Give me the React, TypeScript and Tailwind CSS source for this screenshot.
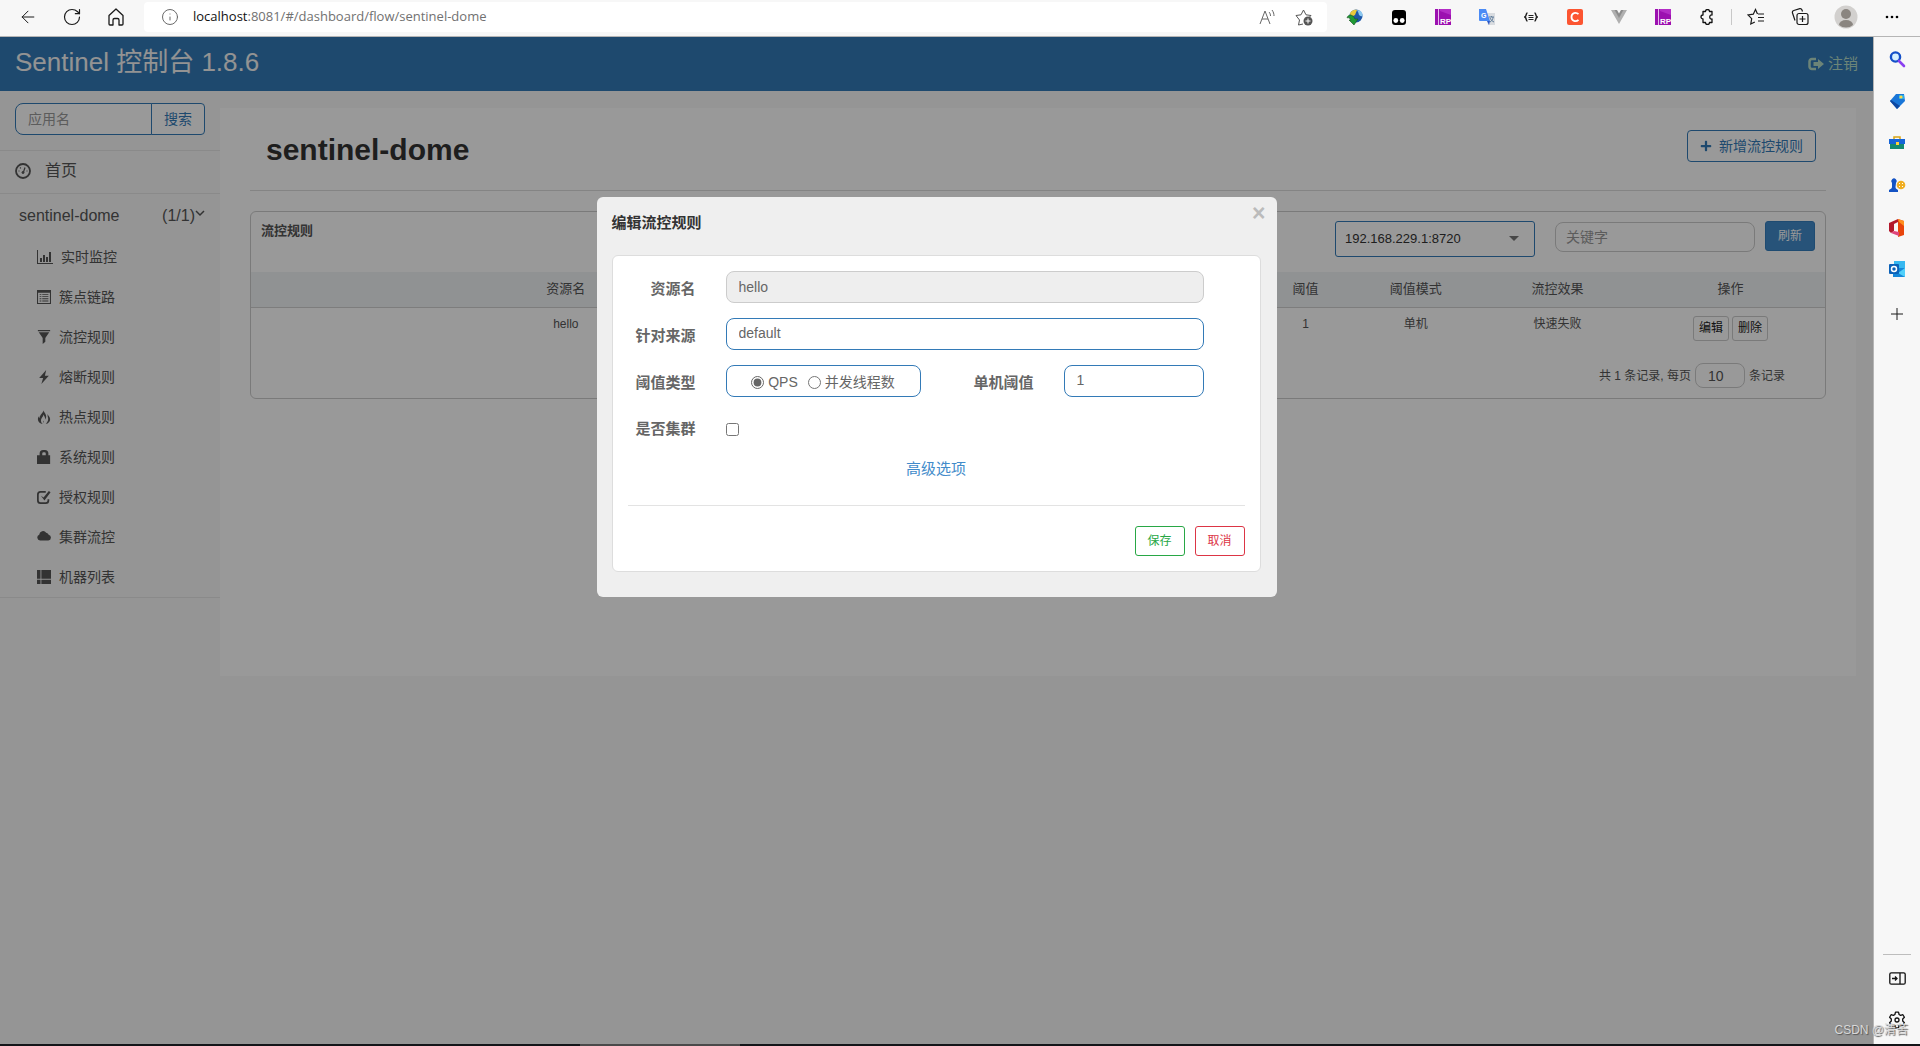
import { useState } from "react";
import type { ReactNode } from "react";
import { ArrowLeft, RotateCw, Info } from "lucide-react";
import { FaPlus } from "react-icons/fa";

function Glyph({ children, size = 14 }: { children: ReactNode; size?: number }) {
  return (
    <svg width={size} height={size} viewBox="0 0 16 16" fill="currentColor" className="shrink-0" aria-hidden="true">
      {children}
    </svg>
  );
}

const menu = [
  {
    name: "实时监控",
    icon: (
      <Glyph size={16}>
        <path d="M0 1h1v13h15v1H0zM3 9h2v4H3zM6 6h2v7H6zM9 8h2v5H9zM12 3h2v10h-2z" />
      </Glyph>
    ),
  },
  {
    name: "簇点链路",
    icon: (
      <Glyph>
        <path d="M0 0h16v16H0zM1.200 3v11.800h13.600V3z" fillRule="evenodd" />
        <path d="M3 4.500h2v1H3zM6 4.500h7v1H6zM3 7h2v1H3zM6 7h7v1H6zM3 9.500h2v1H3zM6 9.500h7v1H6zM3 12h2v1H3zM6 12h7v1H6z" />
      </Glyph>
    ),
  },
  {
    name: "流控规则",
    icon: (
      <Glyph>
        <path d="M1 0h14v1.500H1zM2 2.500h12L9.500 9v4.500L6.500 16V9z" />
      </Glyph>
    ),
  },
  {
    name: "熔断规则",
    icon: (
      <Glyph>
        <path d="M10.500 0 2.500 9H7L5 16l8.500-9.500H9z" />
      </Glyph>
    ),
  },
  {
    name: "热点规则",
    icon: (
      <Glyph>
        <path d="M7.500 0c-.5 2 3 4 3 7.500 0 1.500-.6 2.500-1.500 3.500 1-3-1-4-1.500-6C7 8 4.500 9 4.500 12c0 1.500.8 3 2 4C3.500 15.500 1 13.500 1 10.500c0-1.500.6-2.700 1.500-3.500 0 1 .2 1.700.8 2.300C3 5 7 4 7.500 0z" />
        <path d="M12 4.500c.3 1.500 3 3 3 6 0 2.700-2 4.800-5 5.500 1.500-2 3.500-4 2.500-7.500C12.200 7.500 12 6 12 4.500zM7.500 12c0 1 .8 1 .5 2.500-.8-.5-1-1.500-.5-2.500z" />
      </Glyph>
    ),
  },
  {
    name: "系统规则",
    icon: (
      <Glyph>
        <path d="M3 6V4a4 4 0 0 1 4-4h2a4 4 0 0 1 4 4v2h2v10H0V6zm3 0h4V4a1.500 1.500 0 0 0-1.500-1.500h-1A1.500 1.500 0 0 0 6 4z" fillRule="evenodd" />
      </Glyph>
    ),
  },
  {
    name: "授权规则",
    icon: (
      <Glyph>
        <path d="M10 2H4a3 3 0 0 0-3 3v7a3 3 0 0 0 3 3h6a3 3 0 0 0 3-3v-1.500" fill="none" stroke="currentColor" strokeWidth="2" />
        <path d="m4.500 6.500 3 2L13.500 1l2 1.500L8.500 12z" />
      </Glyph>
    ),
  },
  {
    name: "集群流控",
    icon: (
      <Glyph>
        <path d="M3.500 12A3.500 3.500 0 0 1 2.500 5.300 4.500 4.500 0 0 1 10.500 3a3.200 3.200 0 0 1 2.800 2.500A3.300 3.300 0 0 1 13 12z" />
      </Glyph>
    ),
  },
  {
    name: "机器列表",
    icon: (
      <Glyph>
        <path d="M0 0h4v10H0zM5 0h11v10H5zM0 11h4v5H0zM5 11h11v5H5z" />
      </Glyph>
    ),
  },
];

function RpIcon() {
  return (
    <svg width="16" height="16" viewBox="0 0 16 16">
      <rect width="16" height="16" fill="#9c10b0" />
      <path d="M5 0h11v6L5 2z" fill="#b32cc6" />
      <path d="M3 0h1v16H3z" fill="#e8b8ee" />
      <text x="5" y="15" fontSize="8" fontWeight="700" fill="#fff" fontFamily="Liberation Sans, sans-serif">RP</text>
    </svg>
  );
}

const extensions = [
  {
    label: "下载器",
    icon: (
      <svg width="18" height="16" viewBox="0 0 18 16">
        <circle cx="10" cy="7" r="6.500" fill="#1d57a8" />
        <path d="M11 1c4 0 6 3 5.500 6-2 1-4-1-4-3z" fill="#8cc8f0" />
        <path d="M4 4c2-3 5-4 7-3L9 6l-4 2z" fill="#e8c83c" />
        <path d="M1 9c1-4 6-4 8 1h3l-4 6-5-5h2c-1-2-3-3-4-2z" fill="#1f9a35" stroke="#17501f" strokeWidth=".6" />
      </svg>
    ),
  },
  {
    label: "脚本管理器",
    icon: (
      <svg width="16" height="16" viewBox="0 0 16 16">
        <rect x="1" y="1" width="14" height="15" rx="3" />
        <circle cx="4.800" cy="11.500" r="2.400" fill="#fff" />
        <circle cx="11.200" cy="11.500" r="2.400" fill="#fff" />
      </svg>
    ),
  },
  { label: "原型预览", icon: <RpIcon /> },
  {
    label: "翻译",
    icon: (
      <svg width="16" height="16" viewBox="0 0 16 16">
        <path d="M7 4h9v12H9z" fill="#d9dce0" />
        <path d="M10 8h5M12.500 7v1M11 13c2-1 3-3 3-5M11 9c1 2 2 3 4 4" stroke="#607d9b" fill="none" />
        <path d="M0 0h7l4 12H1a1 1 0 0 1-1-1z" fill="#4b8bf5" />
        <path d="M8 12h3l-1 4z" fill="#2a56c6" />
        <text x="2" y="9" fontSize="7" fontWeight="700" fill="#fff" fontFamily="Liberation Sans, sans-serif">G</text>
      </svg>
    ),
  },
  {
    label: "JSON",
    icon: (
      <svg width="14" height="16" viewBox="0 0 14 16" fill="none" stroke="#222">
        <path d="M3.500 4C1.500 4 3 7 .8 8 3 9 1.500 12 3.500 12M10.500 4c2 0 .5 3 2.700 4-2.200 1-.7 4-2.700 4" strokeWidth="1.500" />
        <path d="M4.500 6.500h5M4.500 8.500h5M4.500 10.500h5" />
      </svg>
    ),
  },
  {
    label: "CSDN",
    icon: (
      <svg width="16" height="16" viewBox="0 0 16 16">
        <rect width="16" height="16" rx="2" fill="#fc5531" />
        <path d="M11.500 5.200C9 2.800 4.500 3.800 4.500 8s4.500 5.200 7 2.800" fill="none" stroke="#fff" strokeWidth="1.800" />
      </svg>
    ),
  },
  {
    label: "Vue",
    icon: (
      <svg width="16" height="16" viewBox="0 0 16 16">
        <path d="M0 1h4l4 7 4-7h4L8 15z" fill="#b0b0b0" />
        <path d="M3.500 1H6l2 3.500L10 1h2.500L8 9z" fill="#8c8c8c" />
      </svg>
    ),
  },
  { label: "原型预览二", icon: <RpIcon /> },
  {
    label: "扩展",
    icon: (
      <svg width="16" height="16" viewBox="0 0 16 16" fill="none" stroke="#111" strokeWidth="1.300" strokeLinejoin="round">
        <path d="M4 2.500h2.500a2 2 0 0 1 4 0H13V6c-3-.8-3 4.800 0 4v3.500h-2.500a2 2 0 0 1-4 0H4V10a2 2 0 0 1 0-4z" />
      </svg>
    ),
  },
];

const sideTools = [
  {
    label: "搜索",
    icon: (
      <>
        <circle cx="6.500" cy="6" r="4.600" fill="#d6f0ff" stroke="#1450c8" strokeWidth="2.400" />
        <path d="m10 10 5 5" stroke="#8a3ff0" strokeWidth="2.600" strokeLinecap="round" />
      </>
    ),
  },
  {
    label: "购物",
    icon: (
      <>
        <path d="M7 1h8l1 7-8 8-7-8z" fill="#1976d8" />
        <path d="M1 8l7 8 3-3-9-6z" fill="#0d47a1" />
        <path d="M10 2h5v4h-5z" fill="#27b0e8" />
        <circle cx="12" cy="4" r="1.600" fill="#ffd54a" />
      </>
    ),
  },
  {
    label: "工具",
    icon: (
      <>
        <path d="M5 5V2h6v3" fill="none" stroke="#d9a514" strokeWidth="1.500" />
        <path d="M0 4h16v5H0z" fill="#1565d8" />
        <path d="M1 9h14v5H1z" fill="#128a72" />
        <path d="M7 7h3v3H7z" fill="#ffd33c" />
      </>
    ),
  },
  {
    label: "游戏",
    icon: (
      <>
        <path d="M3 6a2.700 2.700 0 1 1 4 0l-.5 4c0 1.500 1 2 2.500 3v2H0v-2c1.500-1 3-1.500 3-3z" fill="#1453c4" />
        <circle cx="12" cy="8" r="4.300" fill="#f0ae22" />
        <path d="M10 6h1v1h-1zM13 6h1v1h-1zM10 9h1v1h-1zM13 9h1v1h-1z" fill="#fff" />
      </>
    ),
  },
  {
    label: "Office",
    icon: (
      <>
        <path d="m0 4 9-4v3L5 5v7l-3 2-2-2z" fill="#b3182c" />
        <path d="m9 0 6 2v14l-6 2z" fill="#e8450c" />
        <path d="m2 14 3-2 5 1v4z" fill="#e0457a" />
        <path d="m9 0 6 2v5l-5-4z" fill="#ff8f1f" />
      </>
    ),
  },
  {
    label: "Outlook",
    icon: (
      <>
        <path d="M5 0h11v7H5z" fill="#37b8f0" />
        <path d="M4 7h12v9H4z" fill="#1486d8" />
        <path d="m16 7-7 5 7 4z" fill="#50d0fa" />
        <rect y="3" width="10" height="10" rx="1" fill="#0c62b8" />
        <circle cx="5" cy="8" r="2.500" fill="none" stroke="#fff" strokeWidth="1.500" />
      </>
    ),
  },
];

function BrowserBar() {
  return (
    <div className="flex h-[37px] shrink-0 items-center border-b border-[#b5b5b5] bg-[#f7f7f7] pb-[2px] text-[#1a1a1a]">
      <div className="flex w-[144px] shrink-0 items-center gap-6 pl-[18px]">
        <button aria-label="后退"><ArrowLeft size={20} strokeWidth={1.2} /></button>
        <button aria-label="刷新页面"><RotateCw size={20} strokeWidth={1.4} /></button>
        <button aria-label="主页">
          <svg width="20" height="20" viewBox="0 0 20 20" fill="none" stroke="currentColor" strokeWidth="1.300" strokeLinejoin="round">
            <path d="M3 8.500 10 2l7 6.500V17a1 1 0 0 1-1 1h-3v-5a1.500 1.500 0 0 0-1.500-1.500h-3A1.500 1.500 0 0 0 7 13v5H4a1 1 0 0 1-1-1z" />
          </svg>
        </button>
      </div>
      <div className="flex h-[30px] min-w-0 flex-1 items-center rounded bg-white pr-[14px] pl-[17px]">
        <Info size={18} strokeWidth={1.3} className="shrink-0 text-[#666]" />
        <span className="ml-[14px] flex-1 truncate font-['Open_Sans',sans-serif] text-[13px] text-[#717171]">
          <span className="text-[#111]">localhost</span>:8081/#/dashboard/flow/sentinel-dome
        </span>
        <button aria-label="大声朗读" className="mr-[20px] text-[#666]">
          <svg width="16" height="16" viewBox="0 0 16 16" fill="none" stroke="currentColor">
            <path d="M1 15 6 2l5 13M3 10h6M10 3c1 1 1.500 2.500 1.500 4M13 1c1.500 2 2 4 2 6" />
          </svg>
        </button>
        <button aria-label="添加收藏" className="text-[#555]">
          <svg width="18" height="18" viewBox="0 0 18 18">
            <path d="M8 16l-4.500 1 1-5L1 7.500l5-.7L8.500 2 11 6.800l5 .7-1.500 1.500" fill="none" stroke="currentColor" />
            <circle cx="13" cy="13" r="4.500" fill="currentColor" />
            <path d="M13 10.500v5M10.500 13h5" stroke="#fff" />
          </svg>
        </button>
      </div>
      <div className="flex shrink-0 items-center pl-[6px]">
        {extensions.map((ext) => (
          <button key={ext.label} aria-label={ext.label} className="flex w-[44px] justify-center">
            {ext.icon}
          </button>
        ))}
        <span className="mx-[2px] h-4 w-px bg-[#c8c8c8]"></span>
        <button aria-label="收藏夹" className="flex w-[44px] justify-center">
          <svg width="18" height="18" viewBox="0 0 18 18" fill="none" stroke="currentColor" strokeWidth="1.200">
            <path d="M10.500 6 8.500 1.500 6.300 6.200 1 7l3.700 3.700-.9 5.300 4-2M11 6h6M11 9.500h6M11 13h6" />
          </svg>
        </button>
        <button aria-label="集锦" className="flex w-[44px] justify-center">
          <svg width="18" height="18" viewBox="0 0 18 18" fill="none" stroke="currentColor" strokeWidth="1.200">
            <path d="M4 12.500 1.500 5a2 2 0 0 1 1.300-2.500l6-1.800A2 2 0 0 1 11 2l.5 1.500" />
            <rect x="6" y="5.500" width="11" height="11" rx="2" />
            <path d="M11.500 8v6M8.500 11h6" />
          </svg>
        </button>
        <button aria-label="用户" className="flex w-[48px] justify-center">
          <svg width="24" height="24" viewBox="0 0 24 24">
            <circle cx="12" cy="12" r="11.500" fill="#d2d0ce" />
            <circle cx="12" cy="9" r="5" fill="#8a8580" />
            <path d="M5 20a7 5 0 0 1 14 0 11 11 0 0 1-14 0z" fill="#8a8580" />
          </svg>
        </button>
        <button aria-label="更多" className="flex w-[50px] justify-center pr-[6px]">
          <svg width="14" height="4" viewBox="0 0 14 4">
            <circle cx="2" cy="2" r="1.300" />
            <circle cx="7" cy="2" r="1.300" />
            <circle cx="12" cy="2" r="1.300" />
          </svg>
        </button>
      </div>
    </div>
  );
}

function BrowserSidebar() {
  return (
    <div className="relative flex w-[47px] shrink-0 flex-col items-center border-l border-[#b5b5b5] bg-[#f7f7f7] pt-[14px] pb-[15px]">
      {sideTools.map((tool) => (
        <button key={tool.label} aria-label={tool.label} className="mb-[26px]">
          <svg width="16" height="16" viewBox="0 0 16 16" className="overflow-visible">{tool.icon}</svg>
        </button>
      ))}
      <button aria-label="添加" className="mt-1">
        <svg width="14" height="14" viewBox="0 0 14 14" stroke="#1a1a1a"><path d="M7 1v12M1 7h12" /></svg>
      </button>
      <div className="mt-auto mb-[17px] h-px w-7 bg-[#bdbdbd]"></div>
      <button aria-label="隐藏边栏" className="mb-[26px]">
        <svg width="17" height="13" viewBox="0 0 17 13" fill="none" stroke="#111" strokeWidth="1.300">
          <rect x=".8" y=".8" width="15.400" height="11.400" rx="1.500" />
          <path d="M11 1v11M3 6.500h5M6 4.500l2 2-2 2" />
        </svg>
      </button>
      <button aria-label="设置">
        <svg width="18" height="18" viewBox="0 0 18 18" fill="none" stroke="#111" strokeWidth="1.300" strokeLinejoin="round">
          <path d="M7.500 1.200h3l.6 2.300 1.500.9 2.300-.7 1.500 2.600-1.700 1.700v2l1.700 1.700-1.500 2.600-2.300-.7-1.500.9-.6 2.300h-3l-.6-2.300-1.500-.9-2.300.7-1.500-2.600L3.300 10V8L1.600 6.300l1.500-2.600 2.300.7 1.500-.9z" />
          <circle cx="9" cy="9" r="2" />
        </svg>
      </button>
      <span className="pointer-events-none absolute right-3 bottom-[5px] z-20 text-[12px] whitespace-nowrap text-[#d8d8d8] [text-shadow:1px_1px_1px_#555]">
        CSDN @清苦
      </span>
    </div>
  );
}

function Sidebar() {
  return (
    <aside className="w-[220px] shrink-0">
      <form className="flex px-[15px] pt-3 pb-[15px]">
        <input
          aria-label="应用名"
          placeholder="应用名"
          className="h-8 min-w-0 flex-1 rounded-l-lg border border-[#337ab7] bg-white px-3 text-[14px] placeholder:text-[#999]"
        />
        <button type="button" className="-ml-px h-8 w-[54px] rounded-r border border-[#337ab7] bg-white text-[14px] text-[#337ab7]">
          搜索
        </button>
      </form>
      <nav className="border-y border-[#e7e7e7]">
        <a href="#/dashboard/home" className="flex h-[42px] items-center gap-[14px] pb-[2px] pl-[15px] text-[16px]">
          <svg width="16" height="16" viewBox="0 0 16 16" fill="none" stroke="currentColor">
            <circle cx="8" cy="8" r="7" strokeWidth="1.800" />
            <path d="M8.500 9 10 4.500M3.500 8h1M11.500 8h1M5 4.500l.8.8" strokeWidth="1.200" />
            <circle cx="8" cy="9.500" r="1" fill="currentColor" />
          </svg>
          首页
        </a>
        <a href="#/dashboard/app" className="flex h-[44px] items-center border-t border-[#e7e7e7] pr-[15px] pl-[19px] text-[16px]">
          <span className="flex-1">sentinel-dome</span>
          <span>(1/1)</span>
          <svg width="10" height="8" viewBox="0 0 10 8" fill="none" stroke="currentColor" strokeWidth="1.500" className="mb-1"><path d="m1 1 4 4 4-4" /></svg>
        </a>
        <ul>
          {menu.map((item) => (
            <li key={item.name}>
              <a href="#/dashboard/flow/sentinel-dome" className="flex h-[40px] items-center gap-2 pl-[37px] text-[14px]">
                {item.icon}
                {item.name}
              </a>
            </li>
          ))}
        </ul>
      </nav>
    </aside>
  );
}

const columns = [
  { title: "资源名", value: "hello", width: "w-[40%]" },
  { title: "", value: "", width: "w-[24%]" },
  { title: "阈值", value: "1", width: "w-[6%]" },
  { title: "阈值模式", value: "单机", width: "w-[8%]" },
  { title: "流控效果", value: "快速失败", width: "w-[10%]" },
];

function RulePanel() {
  return (
    <section className="rounded-md border border-[#ccc]">
      <div className="flex h-[60px] items-start pt-[9px] pr-[10px] pl-[10px]">
        <h2 className="flex-1 text-[13px] leading-5 font-bold">流控规则</h2>
        <div className="relative mr-5">
          <select aria-label="机器" className="h-9 w-[200px] appearance-none rounded-[3px] border border-[#337ab7] bg-white px-[9px] text-[13px] text-[#333]">
            <option>192.168.229.1:8720</option>
          </select>
          <span className="pointer-events-none absolute top-[15px] right-4 border-x-5 border-t-5 border-x-transparent border-t-[#777]"></span>
        </div>
        <input
          aria-label="关键字"
          placeholder="关键字"
          className="mt-px mr-[10px] h-[30px] w-[200px] rounded-lg border border-[#ccc] bg-white px-[10px] text-[14px] placeholder:text-[#999]"
        />
        <button className="h-[30px] w-[50px] rounded-[3px] border border-[#357ebd] bg-[#428bca] text-[12px] text-white">刷新</button>
      </div>
      <table className="w-full table-fixed text-center text-[13px]">
        <thead>
          <tr className="h-[35px] border-b border-[#d0d0d0] bg-[#f0f3f6]">
            {columns.map((col) => (
              <th key={col.width} className={`${col.width} pb-[2px] font-normal`}>{col.title}</th>
            ))}
            <th className="w-[12%] pb-[2px] font-normal">操作</th>
          </tr>
        </thead>
        <tbody>
          <tr className="h-[42px] align-top">
            {columns.map((col) => (
              <td key={col.width} className="pt-[6px] text-[12px] leading-5">{col.value}</td>
            ))}
            <td className="pt-2">
              <div className="flex justify-center gap-[3px] text-[12px] text-[#222]">
                <button className="h-[25px] w-9 rounded-[3px] border border-[#ccc] bg-white">编辑</button>
                <button className="h-[25px] w-9 rounded-[3px] border border-[#ccc] bg-white">删除</button>
              </div>
            </td>
          </tr>
        </tbody>
      </table>
      <div className="flex h-[49px] items-center justify-end gap-1 pt-1 pr-[40px] text-[12px]">
        <label htmlFor="page-size">共 1 条记录, 每页</label>
        <input id="page-size" defaultValue="10" className="h-[25px] w-[50px] rounded-lg border border-[#ccc] bg-white px-3 text-[14px]" />
        <span>条记录</span>
      </div>
    </section>
  );
}

function EditDialog() {
  const [origin, setOrigin] = useState("default");
  const [grade, setGrade] = useState("qps");
  const field = "h-8 rounded-lg border border-[#337ab7] bg-white px-3 pb-[2px] text-[14px]";
  const label = "w-[68px] shrink-0 pt-1 text-right text-[15px] font-bold";

  return (
    <div role="dialog" aria-labelledby="dialog-title" className="w-[680px] rounded-md bg-[#efefef] pr-4 pb-[25px] pl-[15px] text-[#666]">
      <div className="flex h-[58px] items-start">
        <h2 id="dialog-title" className="flex-1 pt-[14px] text-[15px] leading-6 font-bold text-[#333]">编辑流控规则</h2>
        <button aria-label="关闭" className="-mr-[5px] pt-1 text-[23px] leading-6 font-bold text-[#bbb]">×</button>
      </div>
      <form className="rounded-md border border-[#ddd] bg-white px-[15px] pt-[15px] pb-[15px]">
        <div className="flex flex-col gap-[15px]">
          <div className="flex items-center gap-[30px]">
            <label htmlFor="resource" className={label}>资源名</label>
            <input id="resource" readOnly value="hello" className="h-8 w-[478px] rounded-lg border border-[#ccc] bg-[#eee] px-3 text-[14px]" />
          </div>
          <div className="flex items-center gap-[30px]">
            <label htmlFor="origin" className={label}>针对来源</label>
            <input id="origin" autoFocus value={origin} onChange={(e) => setOrigin(e.target.value)} className={`${field} w-[478px] outline-none`} />
          </div>
          <div className="flex items-center gap-[30px]">
            <span className={label}>阈值类型</span>
            <div className="flex h-8 w-[195px] items-center justify-center gap-[10px] rounded-lg border border-[#337ab7] pt-[2px] text-[14px]">
              <label className="flex items-center gap-1">
                <input type="radio" name="grade" className="accent-[#666]" checked={grade === "qps"} onChange={() => setGrade("qps")} />
                QPS
              </label>
              <label className="flex items-center gap-1">
                <input type="radio" name="grade" className="accent-[#666]" checked={grade === "thread"} onChange={() => setGrade("thread")} />
                并发线程数
              </label>
            </div>
            <div className="flex w-[253px] items-center justify-end gap-[30px]">
              <label htmlFor="threshold" className={label}>单机阈值</label>
              <input id="threshold" defaultValue="1" className={`${field} w-[140px]`} />
            </div>
          </div>
          <div className="flex h-8 items-center gap-[30px] pt-[2px]">
            <label htmlFor="cluster" className="w-[68px] shrink-0 text-right text-[15px] font-bold">是否集群</label>
            <input id="cluster" type="checkbox" className="h-[13px] w-[13px]" />
          </div>
        </div>
        <div className="flex h-[62px] justify-center border-b border-[#e3e3e3] pt-[13px]">
          <a href="#/advanced" className="text-[15px] leading-6 text-[#428bca]">高级选项</a>
        </div>
        <div className="flex justify-end gap-[10px] pt-5 text-[12px]">
          <button type="button" className="h-[30px] w-[50px] rounded-[3px] border border-[#28a745] text-[#28a745]">保存</button>
          <button type="button" className="h-[30px] w-[50px] rounded-[3px] border border-[#dc3545] text-[#dc3545]">取消</button>
        </div>
      </form>
    </div>
  );
}

export default function App() {
  return (
    <div className="flex min-h-screen flex-col font-['Liberation_Sans','Noto_Sans_CJK_SC',sans-serif] text-[#555]">
      <BrowserBar />
      <div className="flex flex-1">
        <div className="relative min-w-0 flex-1 bg-[#f8f8f8]">
          <header className="flex h-[54px] items-center justify-between bg-[#337ab7] px-[15px]">
            <h1 className="pb-1 text-[26px] leading-9 text-[#f5f5f5]">Sentinel 控制台 1.8.6</h1>
            <a href="#/login" className="flex items-center gap-1 text-[15px] text-[#b4dcc8]">
              <Glyph size={16}>
                <path d="M8 3H4a2.500 2.500 0 0 0-2.500 2.500v5A2.500 2.500 0 0 0 4 13h4" fill="none" stroke="currentColor" strokeWidth="2.500" />
                <path d="M5.500 6H10V3l6 5-6 5v-3H5.500z" />
              </Glyph>
              注销
            </a>
          </header>
          <div className="flex items-start">
            <Sidebar />
            <main className="mt-[17px] mr-[17px] h-[568px] min-w-0 flex-1 bg-white px-[30px]">
              <div className="mb-5 flex h-[83px] items-start justify-between border-b border-[#ddd] pt-[22px] pr-[10px] pl-4">
                <h1 className="text-[30px] leading-10 font-bold text-[#333]">sentinel-dome</h1>
                <button className="flex h-8 items-center gap-[7px] rounded border border-[#337ab7] px-3 text-[14px] text-[#337ab7]">
                  <FaPlus size={12} />
                  新增流控规则
                </button>
              </div>
              <RulePanel />
            </main>
          </div>
          <div className="absolute inset-0 z-10 flex items-start justify-center bg-black/40 pt-[160px]">
            <EditDialog />
          </div>
        </div>
        <BrowserSidebar />
      </div>
      <footer className="h-[2px] bg-[#131519]">
        <div className="ml-[580px] h-full w-40 bg-[#4a4a4a]"></div>
      </footer>
    </div>
  );
}
